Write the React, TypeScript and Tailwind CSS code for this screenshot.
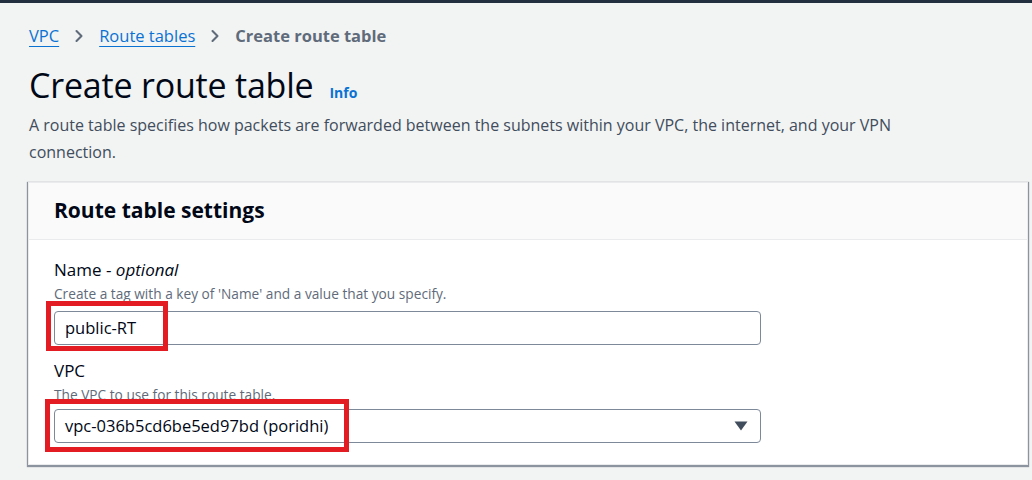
import { ChevronRight } from "lucide-react";

const font = { fontFamily: '"Open Sans", "Noto Sans", Arial, sans-serif' };

export default function App() {
  return (
    <div style={font} className="w-[1032px] h-[480px] bg-[#f2f3f3] overflow-hidden border-t-[3px] border-[#232f3e]">
      {/* Breadcrumb */}
      <nav className="flex items-center pl-[29px] pt-[27px] h-[30px] text-[16.5px] leading-[26px] mt-[4px]">
        <a className="text-[#0972d3] underline underline-offset-[4px] decoration-1">VPC</a>
        <ChevronRight className="w-5 h-5 mx-[10px] text-[#5f6b7a]" strokeWidth={2.5} />
        <a className="text-[#0972d3] underline underline-offset-[4px] decoration-1">Route tables</a>
        <ChevronRight className="w-5 h-5 mx-[10px] text-[#5f6b7a]" strokeWidth={2.5} />
        <span className="font-bold text-[#5f6b7a]">Create route table</span>
      </nav>

      {/* Header */}
      <div className="pl-[29px] pr-[40px] mt-[28px]">
        <div className="flex items-baseline gap-[16px]">
          <h1 className="text-[34px] leading-[40px] text-[#000716] tracking-[-0.2px]">Create route table</h1>
          <span className="text-[14px] font-bold text-[#0972d3]">Info</span>
        </div>
        <p className="text-[16px] leading-[27px] text-[#414d5c] mt-[7px] max-w-[880px]">
          A route table specifies how packets are forwarded between the subnets within your VPC, the internet, and your VPN connection.
        </p>
      </div>

      {/* Card */}
      <div className="ml-[28px] mr-[4px] mt-[16px] bg-white border border-[#e9ebed] shadow-[0_1px_1px_1px_#8c959f]">
        <div className="bg-[#fafafa] border-b border-[#e9ebed] h-[57px] flex items-center px-[25px]">
          <h2 className="text-[21px] font-bold text-[#000716]">Route table settings</h2>
        </div>
        <div className="px-[25px] pt-[17px] pb-[21px]">
          <div className="text-[17px] leading-[26px] text-[#000716]">
            Name - <i>optional</i>
          </div>
          <div className="text-[13.7px] leading-[22px] text-[#5f6b7a]">
            Create a tag with a key of 'Name' and a value that you specify.
          </div>
          <div className="relative w-[707px] mt-[6px]">
            <div className="h-[34px] border border-[#7d8998] rounded-[4px] flex items-center px-[10px] text-[16.5px] text-[#000716]">
              public-RT
            </div>
            <div className="absolute left-[-8px] top-[-10px] w-[122px] h-[50px] border-[5px] border-[#e31b23]" />
          </div>
          <div className="text-[17px] leading-[26px] text-[#000716] mt-[13px]">VPC</div>
          <div className="text-[13.7px] leading-[22px] text-[#5f6b7a]">The VPC to use for this route table.</div>
          <div className="relative w-[707px] mt-[3px]">
            <div className="h-[34px] border border-[#7d8998] rounded-[4px] flex items-center justify-between pl-[10px] pr-[12px] text-[16.5px] text-[#000716]">
              <span>vpc-036b5cd6be5ed97bd (poridhi)</span>
              <svg width="14" height="10" viewBox="0 0 14 10">
                <path d="M0.5 0.5 L13.5 0.5 L7 9.5 Z" fill="#414d5c" />
              </svg>
            </div>
            <div className="absolute left-[-9px] top-[-10px] w-[304px] h-[53px] border-[5px] border-[#e31b23]" />
          </div>
        </div>
      </div>
    </div>
  );
}
